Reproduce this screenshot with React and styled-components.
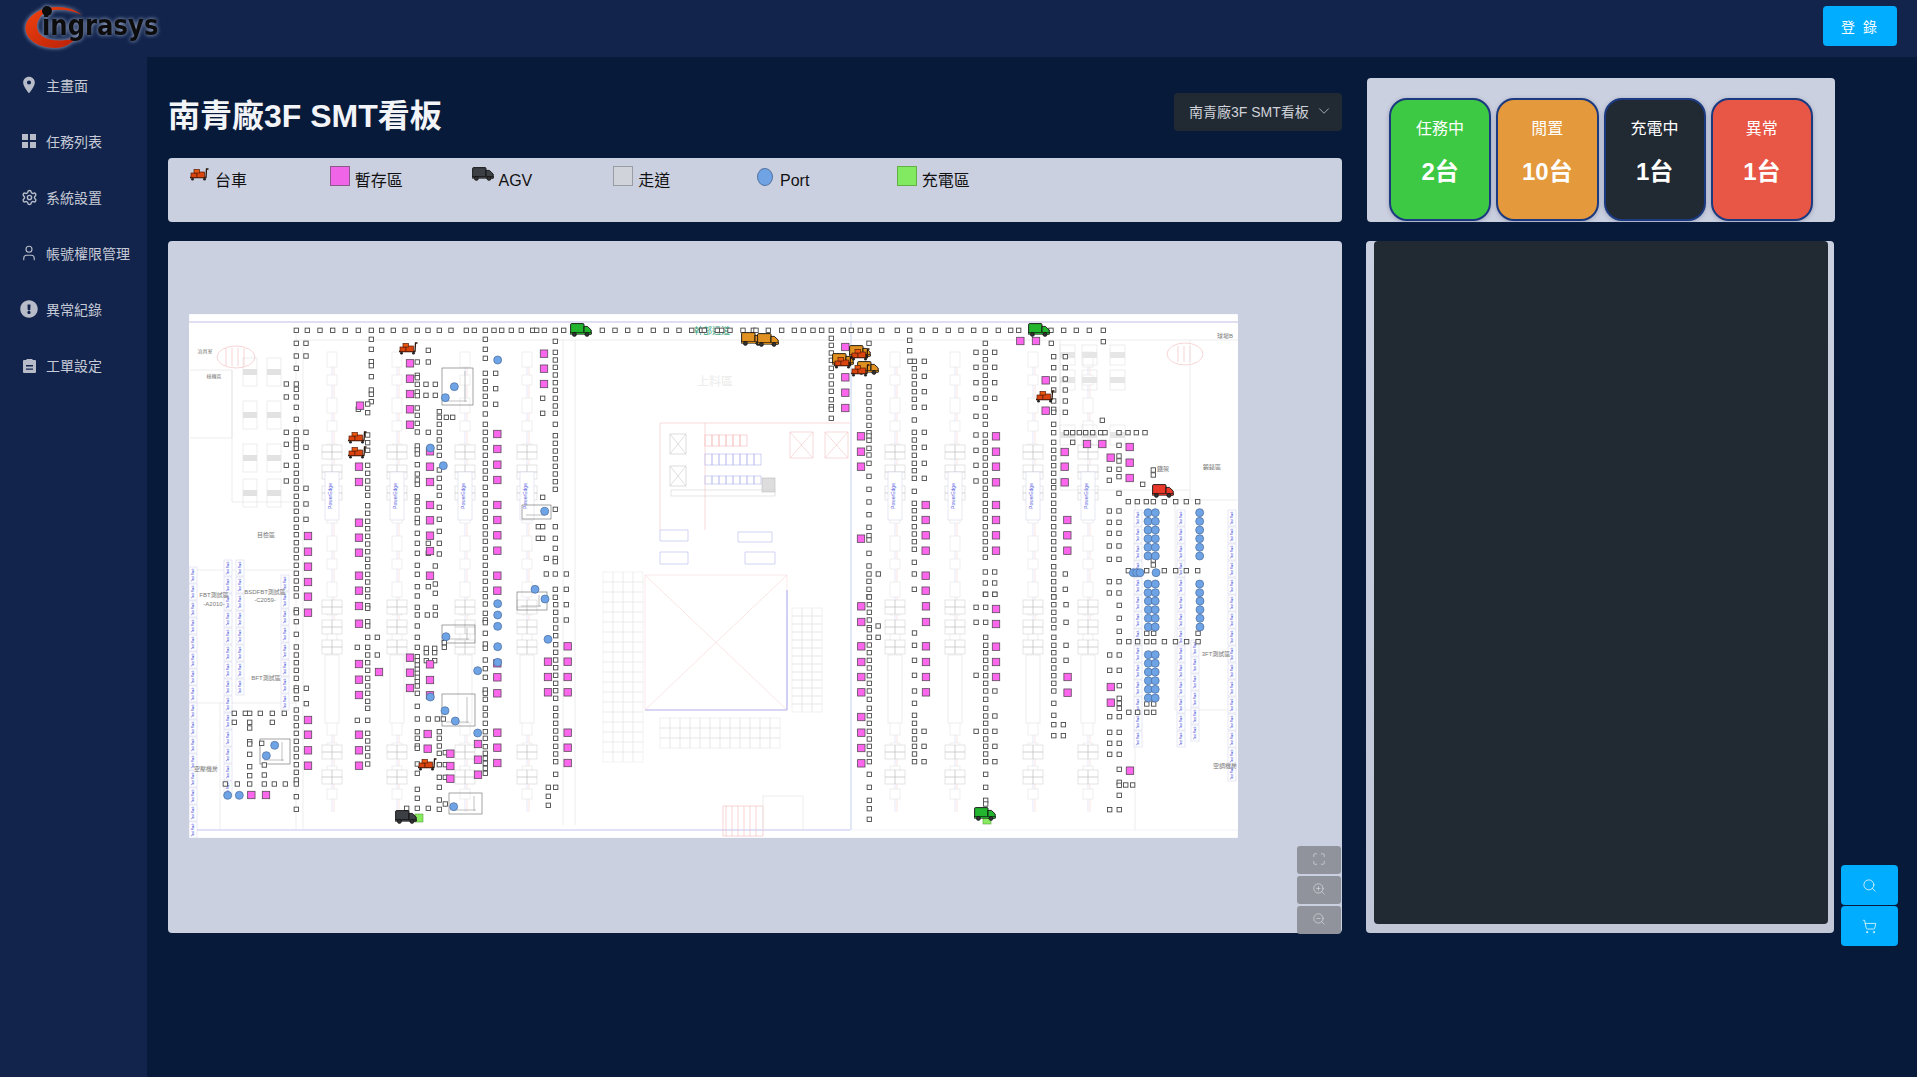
import React from 'react'
import styled, { createGlobalStyle } from 'styled-components'
import { MdPlace } from 'react-icons/md'
import { FaExclamationCircle } from 'react-icons/fa'
import { ChevronDown, Maximize, Search, Settings, ShoppingCart, User, ZoomIn, ZoomOut } from 'lucide-react'

const GlobalStyle = createGlobalStyle`
    html, body {
        margin: 0;
        height: 100%;
        background: #071a3a;
        overflow: hidden;
        font-family: "Liberation Sans", "Noto Sans CJK TC", sans-serif;
    }
    #root { height: 100%; }
`

const Container = styled.div`
    width: 1917px;
    height: 1077px;
    display: flex;
    flex-direction: column;
    position: relative;
`
const Header = styled.header`
    height: 57px;
    flex: none;
    background: #12244c;
    display: flex;
    align-items: flex-start;
    justify-content: space-between;
    padding: 6px 20px 0 20px;
    box-sizing: border-box;
`
const Logo = styled.svg`
    display: block;
    width: 150px;
    height: 51px;
    margin-top: -6px;
    filter: drop-shadow(0 0 2px #a9b6d6);
`
const LoginButton = styled.button`
    width: 74px;
    height: 40px;
    border: 0;
    border-radius: 4px;
    background: #00adff;
    color: #fff;
    font: inherit;
    font-size: 14px;
    letter-spacing: 2px;
`
const Body = styled.div`
    flex: 1;
    display: flex;
    min-height: 0;
`
const Sidebar = styled.nav`
    width: 147px;
    flex: none;
    background: #12244c;
`
const NavItem = styled.div`
    height: 56px;
    display: flex;
    align-items: center;
    color: #c6cad6;
    font-size: 14px;
`
const NavIcon = styled.span`
    width: 46px;
    flex: none;
    display: flex;
    justify-content: center;
    padding-left: 12px;
    box-sizing: border-box;
    color: #b8bcc8;
`
const Main = styled.main`
    flex: 1;
    display: grid;
    grid-template-columns: 1174px 468px;
    grid-template-rows: 144px 692px;
    column-gap: 24px;
    row-gap: 19px;
    padding: 21px 0 0 21px;
    align-content: start;
`
const LeftTop = styled.div`
    display: flex;
    flex-direction: column;
    justify-content: flex-end;
`
const TitleRow = styled.div`
    display: flex;
    align-items: center;
    justify-content: space-between;
    height: 38px;
    margin-bottom: 27px;
`
const Title = styled.h1`
    margin: 0;
    padding-top: 7px;
    color: #f2f4f8;
    font-size: 32px;
    font-weight: 700;
    line-height: 38px;
`
const Select = styled.div`
    width: 168px;
    height: 38px;
    box-sizing: border-box;
    display: flex;
    align-items: center;
    justify-content: space-between;
    padding: 0 9px 2px 15px;
    border-radius: 4px;
    background: #212933;
    color: #cfd2d8;
    font-size: 14px;
`
const Card = styled.section`
    background: #cbd0e0;
    border-radius: 4px;
    box-sizing: border-box;
`
const Legend = styled(Card)`
    height: 64px;
    padding: 8px 20px 0;
    display: grid;
    grid-template-columns: repeat(8, 1fr);
    align-items: start;
`
const LegendItem = styled.div`
    display: flex;
    gap: 5px;
    font-size: 16px;
    line-height: 20px;
    color: #111;
`
const LegendText = styled.span`
    margin-top: 5px;
    white-space: nowrap;
`
const Swatch = styled.span`
    width: 20px;
    height: 20px;
    flex: none;
    box-sizing: border-box;
    background: ${(p) => p.$fill};
    border: 1px solid ${(p) => p.$line};
`
const PortSwatch = styled.span`
    width: 16px;
    height: 18px;
    margin: 2px 2px 0 2px;
    flex: none;
    box-sizing: border-box;
    border-radius: 50%;
    background: #6fa3e4;
    border: 1px solid #53739f;
`
const StatusCard = styled(Card)`
    margin-left: 1px;
    width: 468px;
    padding: 20px 22px 0 22px;
`
const StatusGrid = styled.div`
    display: grid;
    grid-template-columns: repeat(4, 1fr);
    gap: 5px;
    height: 123px;
`
const StatusTile = styled.div`
    background: ${(p) => p.$bg};
    border: 2px solid #1c3a80;
    border-radius: 18px;
    color: #fff;
    text-align: center;
    box-sizing: border-box;
    box-shadow: 0 1px 4px rgba(40, 50, 90, 0.3);
`
const StatusLabel = styled.div`
    margin-top: 19px;
    font-size: 16px;
    line-height: 20px;
`
const StatusValue = styled.div`
    margin-top: 19px;
    font-size: 24px;
    font-weight: 700;
    line-height: 28px;
`
const MapCard = styled(Card)`
    position: relative;
    padding: 73px 0 0 21px;
`
const Plan = styled.svg`
    display: block;
    width: 1049px;
    height: 524px;
    background: #fff;
`
const ZoomTools = styled.div`
    position: absolute;
    right: 1px;
    bottom: -1px;
    display: flex;
    flex-direction: column;
    gap: 2px;
`
const ZoomButton = styled.div`
    width: 44px;
    height: 28px;
    border-radius: 3px;
    background: #90939b;
    color: #e6e8ec;
    display: flex;
    align-items: center;
    justify-content: center;
    padding-bottom: 2px;
    box-sizing: border-box;
`
const DarkCard = styled(Card)`
    padding: 0 6px 9px 8px;
    background: linear-gradient(#cbd0e0, #c1c7d6);
`
const DarkPanel = styled.div`
    height: 100%;
    background: #212933;
    border-radius: 4px;
`
const FloatTools = styled.div`
    position: absolute;
    left: 1841px;
    top: 865px;
    display: flex;
    flex-direction: column;
    gap: 1px;
`
const FloatButton = styled.div`
    width: 57px;
    height: 40px;
    border-radius: 4px;
    background: #00adff;
    color: #fff;
    display: flex;
    align-items: center;
    justify-content: center;
`

const sections = [
    {
        ox: 180, oy: 300, kx: 3,
        rows: [[91, 349, 382, 420, 458, 496, 535, 574, 605, 640, 675, 712, 744, 778, 813, 859, 883, 916, 942, 965, 994, 1024, 1058, 1070, 1093, 1126, 1151, 1267, 1305, 1343, 1381, 1420, 1459, 1497]],
        cols: [
            [349, 130, 168, 205, 252, 268, 291, 322, 358, 397, 420, 433, 445, 469, 496, 520, 543, 565, 589, 612, 634, 658, 682, 704, 728, 750, 773, 796, 820, 843, 866, 888],
            [378, 130, 168, 397, 442, 565, 612, 658],
            [319, 252, 291, 397, 433, 496, 543],
            [574, 118, 148, 185, 197, 230, 270, 283, 305],
            [563, 312, 338, 405, 428, 451, 496, 520, 543, 565, 586, 617, 640, 664, 686, 709, 732, 755, 778, 800, 823, 846, 869, 890],
            [535, 328],
            [712, 186, 226, 233, 253, 276, 287, 324, 346, 370, 396, 438, 450, 462, 494, 522, 540, 553, 590, 607, 630, 655, 668, 700, 730, 760, 796, 823, 860, 888],
            [745, 151, 186, 397, 730, 760, 860],
            [738, 253, 286], [766, 253, 286, 798, 852, 880],
            [778, 335, 352, 373, 397, 420, 442, 466, 510, 535, 562, 586, 622, 658, 694, 730, 762],
            [799, 352], [818, 352],
            [916, 118, 148, 175, 220, 244, 266, 289, 312, 342, 373, 397, 420, 443, 466, 490, 513, 535, 562, 584, 610, 634, 655, 680, 702, 724, 748, 772, 796, 820, 844, 868, 890],
            [947, 220, 266, 313],
            [1126, 124, 157, 180, 202, 225, 248, 271, 295, 318, 340, 373, 407, 430, 453, 476, 499, 522, 545, 568, 628, 680, 715, 745, 775, 785, 822, 868, 892],
            [1088, 295, 340, 592], [1075, 680, 715], [1088, 680, 715], [1099, 775, 822], [1159, 822, 868],
        ],
        pink: [
            [1092, 161, 206, 252], [690, 190, 236, 282, 328, 374], [540, 317],
            [537, 500, 546, 668, 713, 758, 827, 872],
            [750, 454, 500, 546, 615, 661, 707, 753, 827],
            [952, 402, 447, 494, 540, 615, 660, 706, 752, 827, 872],
            [384, 708, 755, 800, 846, 890],
        ],
        ports: [[953, 180], [823, 260], [796, 293], [751, 444], [790, 497], [1094, 634], [1065, 868], [1095, 897]],
    },
    {
        ox: 180, oy: 600, kx: 3,
        rows: [
            [340, 163, 196, 209, 241, 277, 313], [367, 163, 209, 277],
            [552, 136, 172, 209, 253, 283, 316],
        ],
        cols: [
            [349, 30, 38, 65, 103, 141, 165, 188, 211, 235, 264, 272, 296, 330, 354, 377, 400, 424, 447, 470, 494, 517, 540, 552, 590, 628],
            [379, 265, 311],
            [563, 17, 25, 65, 78, 112, 142, 165, 188, 211, 235, 258, 280, 304, 325, 361, 400, 423, 445, 468, 492],
            [532, 142, 361], [592, 112, 165],
            [209, 384, 425, 432, 463, 500, 527], [245, 430], [253, 495, 525],
            [712, 22, 45, 78, 112, 142, 170, 182, 195, 208, 220, 232, 245, 258, 280, 319, 357, 395, 415, 438, 445, 492, 520, 568, 595, 625],
            [742, 45], [766, 22, 45],
            [739, 145, 158, 182], [764, 145, 158, 182],
            [793, 128, 142], [745, 357, 625], [772, 357], [790, 357],
            [778, 395, 415, 438, 460, 494, 532, 562, 600, 628],
            [796, 458, 494, 532, 612], [680, 625],
            [916, 12, 40, 60, 68, 100, 132, 145, 180, 206, 232, 270, 280, 298, 325, 345, 370, 395, 415, 440, 460, 475, 490, 505, 520],
            [1127, 14, 37, 60, 84, 107, 134, 157, 180, 203, 226, 250, 272, 295, 325, 347, 370, 393, 415, 439, 462, 485, 523, 562],
            [1159, 14, 60], [1105, 562, 589, 616],
        ],
        pink: [
            [537, 18, 71, 192, 239, 285, 404, 451, 497],
            [384, 38, 360, 404, 451, 497], [597, 216], [690, 173, 218, 264],
            [750, 193, 240, 286], [743, 402, 446], [811, 461, 498, 536],
            [952, 190, 232, 280, 398, 443, 489], [1104, 185, 231, 277],
            [1163, 139, 185, 231, 277, 398, 443, 489], [894, 432, 479, 524],
            [214, 585], [258, 585],
        ],
        ports: [[953, 11, 45, 79, 140, 187], [1104, 118], [798, 110], [893, 212, 399], [751, 291], [795, 332], [826, 363], [284, 436], [259, 467], [143, 586], [178, 586], [821, 620]],
    },
    {
        ox: 660, oy: 300, kx: 3,
        rows: [[91, 95, 125, 133, 172, 185, 210, 249, 280, 288, 325]],
        cols: [],
        pink: [],
        ports: [],
    },
    {
        ox: 780, oy: 300, kx: 3,
        rows: [
            [91, 5, 43, 70, 99, 125, 154, 190, 214, 241, 267, 305, 352, 389, 427, 466, 505, 543, 581, 616, 655, 692, 716, 813, 851, 889, 928, 970],
            [398, 859, 878, 898, 917, 938, 962, 975, 1017, 1044, 1069, 1095],
            [605, 1045, 1072, 1099, 1120, 1153, 1187, 1219, 1253],
            [812, 1045, 1100, 1153, 1187, 1219, 1253],
        ],
        cols: [
            [154, 115, 136, 159, 181, 205, 228, 252, 274, 299, 320, 328, 355],
            [267, 130, 260, 283, 306, 329, 352, 376, 398, 408, 421, 445, 465, 490, 529, 568, 606, 644, 682, 707, 720, 760, 798, 822, 844, 868, 890],
            [295, 822], [389, 121, 152],
            [403, 184, 206, 229, 252, 275, 298, 322, 360, 397, 420, 443, 466, 490, 512, 535, 574, 610, 632, 655, 680, 702, 725, 748, 787, 822, 868],
            [433, 184, 229, 275, 322, 397, 442, 490, 535], [390, 184],
            [588, 157, 202, 248, 295, 349, 405, 451, 496, 543],
            [616, 130, 157, 179, 202, 226, 248, 271, 295, 322, 349, 373, 405, 427, 451, 474, 496, 520, 543, 565, 586, 610, 632, 655, 680, 702, 725, 748, 772, 816, 849, 883],
            [644, 157, 202, 248, 295, 816, 849, 883],
            [814, 130],
            [821, 170, 203, 237, 270, 303, 328, 337, 373, 398, 427, 451, 474, 497, 520, 544, 563, 586, 610, 632, 655, 680, 702, 725, 748, 772, 800, 822, 845, 868, 890],
            [856, 170, 203, 237, 270, 303, 337, 822, 868],
            [970, 125], [967, 361], [878, 427],
            [1017, 436, 468, 483, 508, 530, 580, 633, 667, 700, 738, 778, 845, 879],
            [988, 508, 541, 633, 667, 700, 738, 778, 845, 879],
            [1120, 510, 525, 780, 795], [1088, 553],
        ],
        pink: [
            [196, 141, 232, 278, 324], [243, 409, 455, 500, 716],
            [437, 615, 660, 706, 752, 827, 872],
            [648, 409, 455, 500, 547, 615, 660, 706, 752],
            [854, 456, 500, 547], [862, 660, 706, 752], [797, 241, 332],
            [721, 123], [768, 123], [921, 432], [967, 432],
            [1049, 441, 488, 534], [992, 473],
        ],
        ports: [
            [1104, 638, 664, 690, 716, 742, 768, 852, 878],
            [1126, 638, 664, 690, 716, 742, 768, 852, 878],
            [1259, 638, 664, 690, 716, 742, 768, 852, 878],
            [1060, 818], [1070, 818], [1080, 818], [1128, 818],
        ],
    },
    {
        ox: 660, oy: 590, kx: 2.613,
        rows: [
            [155, 1200, 1225, 1248, 1272, 1290, 1318, 1347, 1376, 1406],
            [367, 1225, 1248, 1272, 1290],
        ],
        cols: [
            [547, 21, 44, 67, 90, 113, 119, 142, 165, 188, 211, 234, 257, 280, 303, 328, 355, 377, 400, 424, 447, 469, 492, 515, 553, 592, 631, 656, 688],
            [570, 108, 142],
            [665, 129, 166, 211, 256, 303, 340, 376, 400, 424, 447, 469, 492, 515],
            [690, 424, 469, 515],
            [851, 13, 52, 97, 142, 166, 188, 211, 234, 257, 280, 303, 328, 355, 378, 400, 424, 447, 469, 492, 515, 553, 592, 631, 642],
            [875, 13, 303, 378, 424, 469, 515],
            [826, 52, 97, 256, 424],
            [1029, 21, 44, 67, 90, 113, 142, 166, 188, 211, 234, 257, 280, 303, 340, 376, 404, 437],
            [1061, 44, 97, 166, 211], [1054, 404, 437],
            [1200, 46, 85, 124, 195, 241, 287, 325, 340, 355, 380, 427, 460, 493, 538, 577, 586, 616, 659],
            [1175, 195, 241, 380, 427, 460, 493, 659],
            [1272, 130, 342], [1290, 130, 342], [1406, 130],
            [1217, 585], [1235, 585],
        ],
        pink: [
            [526, 49, 96, 169, 216, 261, 307, 381, 428, 474, 520],
            [695, 49, 96, 169, 216, 261, 307],
            [878, 57, 102, 170, 216, 261], [1065, 261, 308], [1178, 291, 338], [1228, 542],
        ],
        ports: [
            [1276, 33, 59, 85, 111, 194, 220, 246, 272, 298, 324],
            [1294, 33, 59, 85, 111, 194, 220, 246, 272, 298, 324],
            [1411, 33, 59, 85, 111],
        ],
    },
]

const marksOf = (key) =>
    sections.flatMap((s) => {
        const fromCols = (s[key] || []).flatMap(([x, ...ys]) =>
            ys.map((y) => [s.ox + x / s.kx, s.oy + y / 3])
        )
        const fromRows = key === 'cols'
            ? s.rows.flatMap(([y, ...xs]) => xs.map((x) => [s.ox + x / s.kx, s.oy + y / 3]))
            : []
        return [...fromCols, ...fromRows]
    })

const hollow = marksOf('cols')
const pink = marksOf('pink')
const ports = marksOf('ports')

const lineColumns = [332, 397, 465, 527, 895, 955, 1033, 1088]
const benchRows = [445, 465, 486, 600, 620, 640, 745, 770]
const machineFrames = [
    [442, 368, 31, 37], [522, 505, 29, 14], [442, 625, 33, 18], [442, 694, 33, 32],
    [260, 739, 30, 25], [449, 793, 33, 21], [517, 592, 30, 18],
]
const rackColumns = [
    [193, 567, 16], [228, 560, 14], [240, 560, 8], [285, 575, 8],
    [1138, 510, 14], [1181, 510, 14], [1195, 640, 6], [1232, 510, 16],
]

const range = (from, to, step) => {
    const out = []
    for (let v = from; v < to; v += step) out.push(v)
    return out
}

const Truck = ({ x, y, color, line = '#111', w = 22 }) => (
    <svg x={x - w / 2} y={y - (w * 0.64) / 2} width={w} height={w * 0.64} viewBox="0 0 22 14">
        <rect x="0.6" y="0.6" width="13.4" height="9.6" rx="1" fill={color} stroke={line} strokeWidth="0.9" />
        <path d="M14 3.4h3.4l3.8 3.6v4H14z" fill={color} stroke={line} strokeWidth="0.9" />
        <rect x="0.6" y="9.4" width="20.6" height="1.8" fill={color} stroke={line} strokeWidth="0.6" />
        <circle cx="4.4" cy="11.4" r="2" fill="#333" stroke={line} strokeWidth="0.7" />
        <circle cx="17" cy="11.4" r="2" fill="#333" stroke={line} strokeWidth="0.7" />
    </svg>
)

const Cart = ({ x, y, w = 20 }) => (
    <svg x={x - w / 2} y={y - (w * 0.7) / 2} width={w} height={w * 0.7} viewBox="0 0 20 14">
        <path d="M1 10.5h16.5M17 10.5L17.5 2h2" fill="none" stroke="#2b1408" strokeWidth="1.3" />
        <rect x="2" y="6" width="6" height="4.5" fill="#d9440f" stroke="#5a1c06" strokeWidth="0.7" />
        <rect x="8" y="5" width="7.5" height="5.5" fill="#d9440f" stroke="#5a1c06" strokeWidth="0.7" />
        <rect x="5" y="2.5" width="5.5" height="3.5" fill="#e8560f" stroke="#5a1c06" strokeWidth="0.7" />
        <circle cx="3.5" cy="12.2" r="1.4" fill="#222" />
        <circle cx="15.5" cy="12.2" r="1.4" fill="#222" />
    </svg>
)

const Backdrop = () => (
    <g fill="none" stroke="#e0e0e0" strokeWidth="0.6">
        <rect x="189" y="314" width="1049" height="8" stroke="#e4ecf4" />
        <path d="M189 322H1238" stroke="#d9d4ec" strokeWidth="1.4" />
        <rect x="189" y="830" width="1049" height="8" stroke="#e4ecf4" />
        <path d="M189 830H850" stroke="#d9d9f8" strokeWidth="1.4" />
        <path d="M851 322V830" stroke="#c2cdf0" strokeWidth="0.9" />
        <path d="M1090 340H1238M296 340H1090M296 330V830M303 340V830M563 340V825M575 340V825" />
        <path d="M190 370H232V438H190M232 370V502H296M189 570H296M189 703H296M220 703V830" />
        {[250, 274].flatMap((x) =>
            [372, 415, 458, 493].map((y) => (
                <g key={`${x}-${y}`}>
                    <rect x={x - 7} y={y - 14} width="14" height="28" />
                    <rect x={x - 7} y={y - 3} width="14" height="6" fill="#e2e2e2" stroke="none" />
                </g>
            ))
        )}
        <ellipse cx="236" cy="357" rx="19" ry="11" stroke="#f3b9b9" />
        <path d="M226 348V366M232 348V366M238 348V366M244 348V366" stroke="#f3b9b9" />
        <ellipse cx="1185" cy="354" rx="18" ry="11" stroke="#f3b9b9" />
        <path d="M1178 346V362M1184 346V362M1190 346V362" stroke="#f3b9b9" />

        {lineColumns.map((x) => (
            <g key={x}>
                <path d={`M${x} 352V812`} stroke="#d8dcf4" />
                <path d={`M${x + 2} 352V812`} stroke="#f6d4d4" />
                {range(352, 812, 23).map((y, i) => (
                    <rect key={y} x={x - 5} y={y} width="10" height={i % 2 ? 10 : 15} fill="#fff" stroke="#e4e4e4" />
                ))}
                {benchRows.map((y) => (
                    <g key={y} stroke="#d4d4d4">
                        <rect x={x - 10} y={y} width="20" height="14" fill="#fff" />
                        <path d={`M${x - 10} ${y + 7}H${x + 10}M${x} ${y}V${y + 14}`} stroke="#b4b4b4" />
                    </g>
                ))}
                <rect x={x - 7} y="472" width="14" height="48" fill="#fff" stroke="#d6d6ee" />
                <text x={x} y="496" fontSize="5" fill="#5660e0" stroke="none" textAnchor="middle" transform={`rotate(-90 ${x} 496)`}>PowerEdge</text>
                <rect x={x - 7} y="655" width="14" height="68" fill="#fff" stroke="#e0e0e0" />
            </g>
        ))}

        <path d="M660 423H850M660 423V530M705 423V530M790 432h23v26h-23zM790 432l23 26M813 432l-23 26M825 432h23v26h-23zM825 432l23 26M848 432l-23 26" stroke="#f4c4c4" />
        <path d="M670 434h16v20h-16zM670 434l16 20M686 434l-16 20M670 466h16v20h-16zM670 466l16 20M686 466l-16 20" stroke="#c8c8c8" />
        {range(705, 747, 7).map((x) => <rect key={x} x={x} y="435" width="7" height="11" stroke="#f4b4b4" />)}
        {range(705, 760, 7).map((x) => <rect key={x} x={x} y="454" width="7" height="11" stroke="#b0b4ea" />)}
        {range(705, 760, 7).map((x) => <rect key={x} x={x} y="476" width="7" height="8" stroke="#b0b4ea" />)}
        <rect x="762" y="478" width="13" height="14" fill="#ddd" stroke="#bbb" />
        <rect x="671" y="490" width="104" height="6" stroke="#d4d4d4" />

        <path d="M660 530h28v11h-28zM660 552h28v12h-28zM738 532h34v10h-34zM745 552h30v12h-30z" stroke="#b4b8ec" />
        <path d="M645 575H787V710H645Z" stroke="#f8dede" />
        <path d="M645 575L787 710M787 575L645 710" stroke="#f8d4d4" />
        <path d="M787 590V710M645 710H787" stroke="#b4b8f0" strokeWidth="1.2" />
        {range(792, 820, 10).flatMap((x) =>
            range(608, 705, 8).map((y) => <rect key={`${x}-${y}`} x={x} y={y} width="10" height="8" stroke="#e8e8e8" />)
        )}
        {range(660, 780, 10).flatMap((x) =>
            range(718, 748, 10).map((y) => <rect key={`${x}-${y}`} x={x} y={y} width="10" height="10" stroke="#e8e8e8" />)
        )}
        {range(603, 636, 10).flatMap((x) =>
            range(572, 758, 10).map((y) => <rect key={`${x}-${y}`} x={x} y={y} width="10" height="10" stroke="#eaeaea" />)
        )}
        <path d="M723 806h40v30h-40z" stroke="#f0b8b8" />
        {range(726, 762, 6).map((x) => <path key={x} d={`M${x} 806V836`} stroke="#f0b8b8" />)}
        <rect x="763" y="796" width="40" height="34" />

        <path d="M1060 340V490H1190M1190 340V500M1238 500H1135V830M1175 500V710H1238" />
        {[1060, 1082, 1110].flatMap((x) =>
            [345, 370, 425].map((y) => (
                <g key={`${x}-${y}`}>
                    <rect x={x} y={y} width="15" height="20" />
                    <rect x={x} y={y + 7} width="15" height="6" fill="#e6e6e6" stroke="none" />
                </g>
            ))
        )}

        {rackColumns.flatMap(([x, top, n]) =>
            range(0, n, 1).map((i) => (
                <g key={`${x}-${i}`}>
                    <rect x={x - 4} y={top + i * 17} width="8" height="16" stroke="#d6d6ee" fill="#fff" />
                    <text
                        x={x + 1}
                        y={top + i * 17 + 8}
                        fontSize="3"
                        fill="#3540d8"
                        stroke="none"
                        textAnchor="middle"
                        transform={`rotate(-90 ${x + 1} ${top + i * 17 + 8})`}
                    >
                        Test Rack
                    </text>
                </g>
            ))
        )}
        {machineFrames.map(([x, y, w, h]) => (
            <g key={`${x}-${y}`} stroke="#666">
                <rect x={x} y={y} width={w} height={h} />
                <path d={`M${x + 4} ${y + h - 4}h${w - 10}M${x + w - 8} ${y + 3}v${h - 6}`} stroke="#999" />
            </g>
        ))}
        <g fill="#777" stroke="none" fontSize="6" textAnchor="middle">
            <text x="205" y="353" fontSize="5">冶具室</text>
            <text x="214" y="378" fontSize="5">樣機區</text>
            <text x="266" y="537">目檢區</text>
            <text x="214" y="597">FBT測試區</text>
            <text x="214" y="606">-A2010-</text>
            <text x="265" y="594">BSDFBT測試區</text>
            <text x="265" y="602">-C2059-</text>
            <text x="266" y="680">BFT測試區</text>
            <text x="206" y="771">空壓機房</text>
            <text x="1212" y="469">鍛錶區</text>
            <text x="1163" y="471">鐵架</text>
            <text x="1216" y="656">3FT測試區</text>
            <text x="1225" y="768">空調機房</text>
            <text x="1225" y="338">球場B</text>
        </g>
        <text x="715" y="386" fontSize="12" fill="#ececec" stroke="none" textAnchor="middle">上料區</text>
        <text x="712" y="334" fontSize="9" fill="#2f9e78" stroke="none" textAnchor="middle">幹部通道</text>
    </g>
)

const FloorPlan = () => (
    <Plan viewBox="189 314 1049 524">
        <Backdrop />
        {hollow.map(([x, y], i) => (
            <rect key={i} x={x - 2.2} y={y - 2.2} width="4.4" height="4.4" fill="#fff" stroke="#4a4a4a" strokeWidth="0.9" />
        ))}
        {pink.map(([x, y], i) => (
            <rect key={i} x={x - 3.7} y={y - 3.7} width="7.4" height="7.4" fill="#fb66ec" stroke="#5a4a5a" strokeWidth="0.8" />
        ))}
        {ports.map(([x, y], i) => (
            <circle key={i} cx={x} cy={y} r="4" fill="#6ea4e6" stroke="#4a6c9c" strokeWidth="0.7" />
        ))}
        <rect x="415" y="814" width="8" height="8" fill="#86ea5e" stroke="#5aa040" strokeWidth="0.6" />
        <rect x="983" y="816" width="8" height="8" fill="#86ea5e" stroke="#5aa040" strokeWidth="0.6" />
        <Truck x={581} y={330} color="#22b52d" />
        <Truck x={1039} y={330} color="#22b52d" />
        <Truck x={985} y={814} color="#22b52d" />
        <Truck x={1163} y={491} color="#e8392b" />
        <Truck x={406} y={817} color="#3c3f44" />
        <Truck x={752} y={339} color="#e1911f" />
        <Truck x={768} y={340} color="#e1911f" />
        <Truck x={860} y={352} color="#e1911f" />
        <Truck x={843} y={360} color="#e1911f" />
        <Truck x={868} y={368} color="#e1911f" />
        <Cart x={408} y={348} />
        <Cart x={357} y={437} />
        <Cart x={357} y={452} />
        <Cart x={1045} y={396} />
        <Cart x={427} y={764} />
        <Cart x={860} y={354} />
        <Cart x={843} y={362} />
        <Cart x={860} y={370} />
    </Plan>
)

const navItems = [
    { label: '主畫面', icon: <MdPlace size={20} /> },
    {
        label: '任務列表',
        icon: (
            <svg width="14" height="14" viewBox="0 0 14 14" fill="currentColor">
                <rect width="6" height="6" />
                <rect x="8" width="6" height="6" />
                <rect y="8" width="6" height="6" />
                <rect x="8" y="8" width="6" height="6" />
            </svg>
        ),
    },
    { label: '系統設置', icon: <Settings size={17} strokeWidth={2} /> },
    { label: '帳號權限管理', icon: <User size={18} strokeWidth={1.5} /> },
    { label: '異常紀錄', icon: <FaExclamationCircle size={18} /> },
    {
        label: '工單設定',
        icon: (
            <svg width="13" height="15" viewBox="0 0 13 15" fill="currentColor">
                <path d="M1 2h2.5V1h6v1H12a1 1 0 0 1 1 1v11a1 1 0 0 1-1 1H1a1 1 0 0 1-1-1V3a1 1 0 0 1 1-1zm2 5v1.4h7V7zm0 3.4v1.4h7v-1.4z" fillRule="evenodd" />
            </svg>
        ),
    },
]

const statuses = [
    { label: '任務中', value: '2台', bg: '#3ec944' },
    { label: '閒置', value: '10台', bg: '#e3993c' },
    { label: '充電中', value: '1台', bg: '#212933' },
    { label: '異常', value: '1台', bg: '#e85646' },
]

const LegendIcon = ({ children }) => (
    <svg width="22" height="16" viewBox="187 0 22 16" style={{ flex: 'none' }}>{children}</svg>
)

const App = () => {
    return (
        <Container>
            <GlobalStyle />
            <Header>
                <Logo viewBox="0 0 150 51">
                    <defs>
                        <linearGradient id="swoosh" x1="0" y1="0" x2="1" y2="1">
                            <stop offset="0" stopColor="#f0420f" />
                            <stop offset="1" stopColor="#b81f08" />
                        </linearGradient>
                    </defs>
                    <path d="M62 15C50 4 20 3 8 20C0 33 12 48 35 48C45 48 52 43 56 38C46 41 30 42 22 36C14 29 16 20 24 13C32 8 50 9 62 15Z" fill="url(#swoosh)" />
                    <circle cx="27" cy="11" r="5" fill="#0c0c0c" />
                    <text
                        transform="translate(22 35) scale(0.87 1)"
                        fontFamily="DejaVu Sans"
                        fontWeight="700"
                        fontSize="28"
                        fill="#0c0c0c"
                    >
                        ingrasys
                    </text>
                </Logo>
                <LoginButton>登 錄</LoginButton>
            </Header>
            <Body>
                <Sidebar>
                    {navItems.map((item) => (
                        <NavItem key={item.label}>
                            <NavIcon>{item.icon}</NavIcon>
                            {item.label}
                        </NavItem>
                    ))}
                </Sidebar>
                <Main>
                    <LeftTop>
                        <TitleRow>
                            <Title>南青廠3F SMT看板</Title>
                            <Select>
                                南青廠3F SMT看板
                                <ChevronDown size={18} strokeWidth={1} />
                            </Select>
                        </TitleRow>
                        <Legend>
                            <LegendItem>
                                <LegendIcon><Cart x={198} y={8} /></LegendIcon>
                                <LegendText>台車</LegendText>
                            </LegendItem>
                            <LegendItem>
                                <Swatch $fill="#f065e8" $line="#8a5a8a" />
                                <LegendText>暫存區</LegendText>
                            </LegendItem>
                            <LegendItem>
                                <LegendIcon><Truck x={198} y={8} color="#3c3f44" /></LegendIcon>
                                <LegendText>AGV</LegendText>
                            </LegendItem>
                            <LegendItem>
                                <Swatch $fill="#d0d3da" $line="#9a9ca4" />
                                <LegendText>走道</LegendText>
                            </LegendItem>
                            <LegendItem>
                                <PortSwatch />
                                <LegendText>Port</LegendText>
                            </LegendItem>
                            <LegendItem>
                                <Swatch $fill="#82ea60" $line="#62b048" />
                                <LegendText>充電區</LegendText>
                            </LegendItem>
                        </Legend>
                    </LeftTop>
                    <StatusCard>
                        <StatusGrid>
                            {statuses.map((s) => (
                                <StatusTile key={s.label} $bg={s.bg}>
                                    <StatusLabel>{s.label}</StatusLabel>
                                    <StatusValue>{s.value}</StatusValue>
                                </StatusTile>
                            ))}
                        </StatusGrid>
                    </StatusCard>
                    <MapCard>
                        <FloorPlan />
                        <ZoomTools>
                            <ZoomButton><Maximize size={14} strokeWidth={1} /></ZoomButton>
                            <ZoomButton><ZoomIn size={14} strokeWidth={1} /></ZoomButton>
                            <ZoomButton><ZoomOut size={14} strokeWidth={1} /></ZoomButton>
                        </ZoomTools>
                    </MapCard>
                    <DarkCard>
                        <DarkPanel />
                    </DarkCard>
                </Main>
            </Body>
            <FloatTools>
                <FloatButton><Search size={15} strokeWidth={1.2} /></FloatButton>
                <FloatButton><ShoppingCart size={15} strokeWidth={1.2} /></FloatButton>
            </FloatTools>
        </Container>
    )
}

export default App
